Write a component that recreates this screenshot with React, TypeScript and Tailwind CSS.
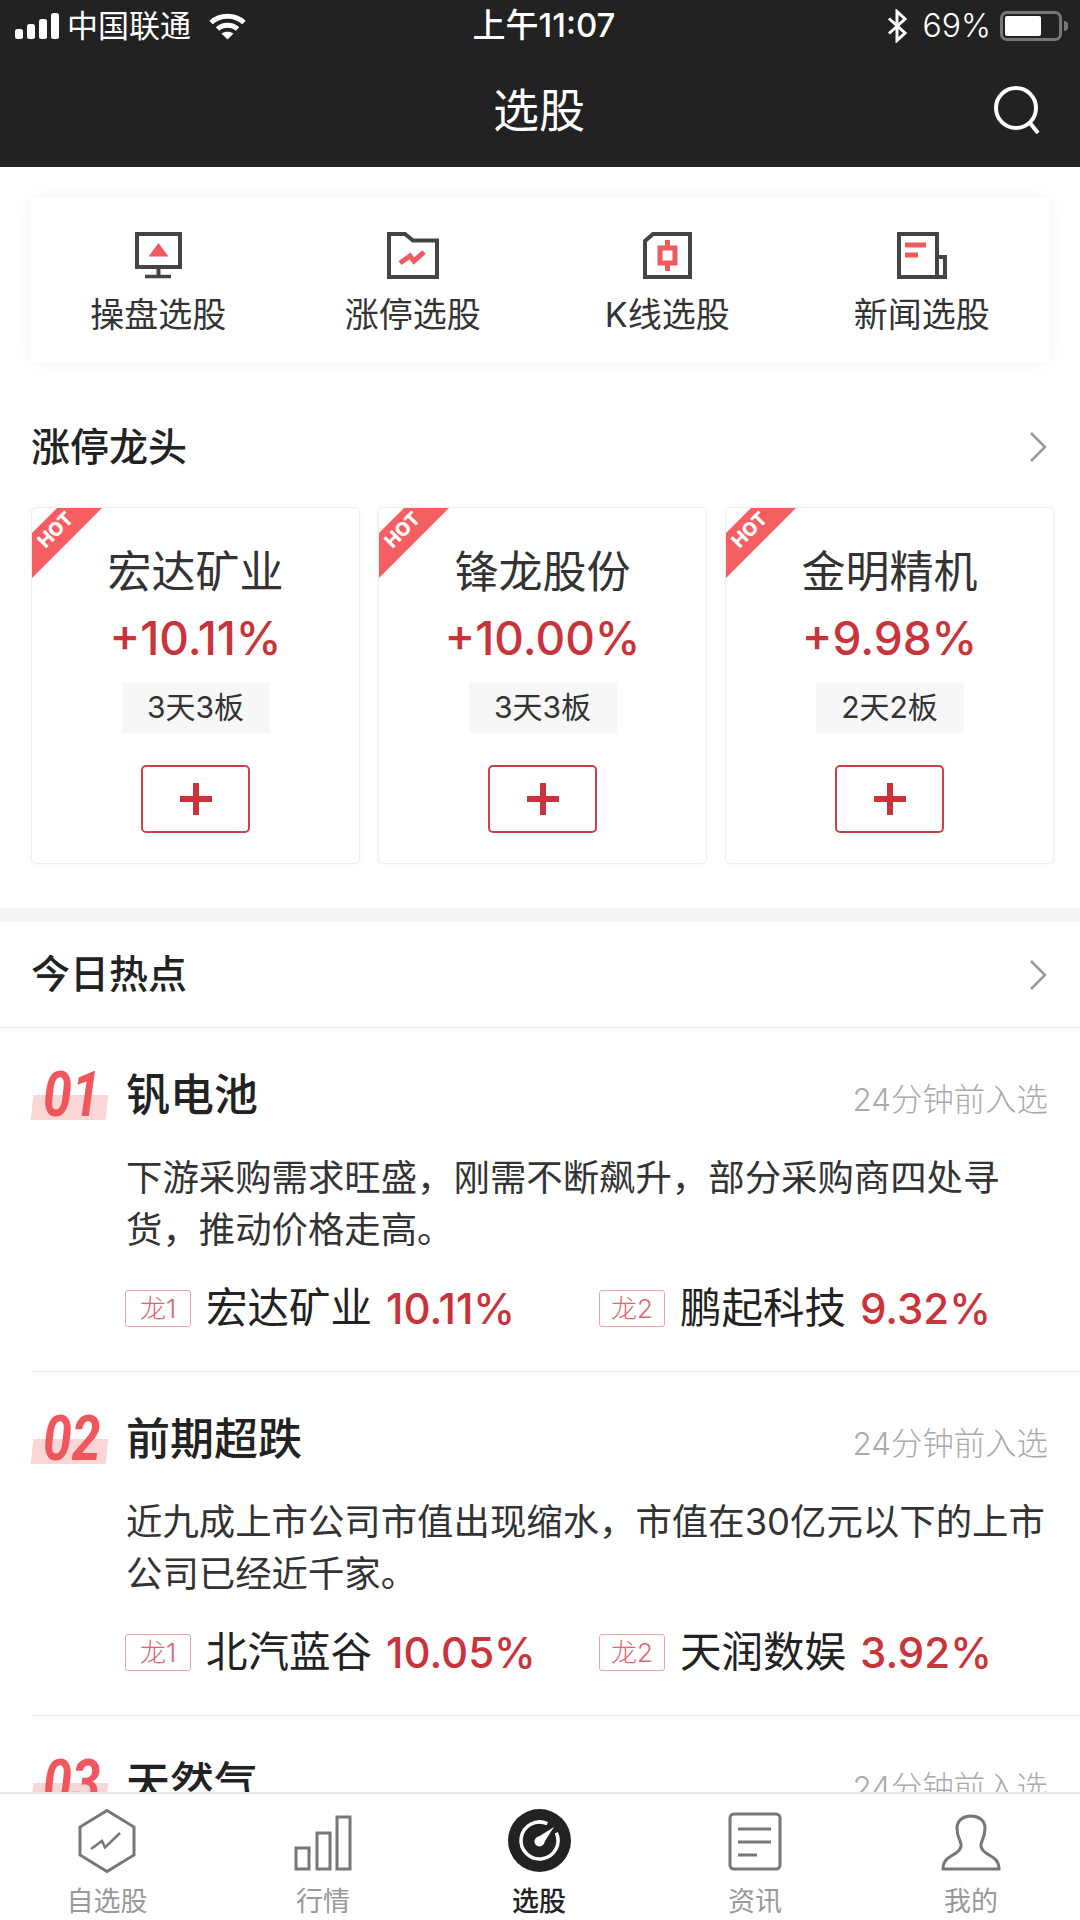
const FONT = "font-['Inter','Noto_Sans_CJK_SC',sans-serif]";

const leaders = [
  { name: "宏达矿业", pct: "+10.11%", days: "3天3板" },
  { name: "锋龙股份", pct: "+10.00%", days: "3天3板" },
  { name: "金明精机", pct: "+9.98%", days: "2天2板" },
];

const topics = [
  {
    no: "01",
    title: "钒电池",
    desc: "下游采购需求旺盛，刚需不断飙升，部分采购商四处寻货，推动价格走高。",
    stocks: [
      { name: "宏达矿业", pct: "10.11%" },
      { name: "鹏起科技", pct: "9.32%" },
    ],
  },
  {
    no: "02",
    title: "前期超跌",
    desc: "近九成上市公司市值出现缩水，市值在30亿元以下的上市公司已经近千家。",
    stocks: [
      { name: "北汽蓝谷", pct: "10.05%" },
      { name: "天润数娱", pct: "3.92%" },
    ],
  },
  { no: "03", title: "天然气", desc: "", stocks: [] },
];

function StatusBar() {
  return (
    <div className="grid h-[52px] grid-cols-3 items-center px-[15px] text-[31px] text-white">
      <div className="flex items-center">
        <svg width="44" height="27" viewBox="0 0 44 27" fill="#fff">
          <rect x="0" y="16" width="8" height="10" rx="2.5" />
          <rect x="12" y="11" width="8" height="15" rx="2.5" />
          <rect x="24" y="6" width="8" height="20" rx="2.5" />
          <rect x="36" y="0" width="8" height="26" rx="2.5" />
        </svg>
        <span className="ml-[8px]">中国联通</span>
        <svg className="ml-[18px]" width="37" height="27" viewBox="0 0 37 27" fill="none" stroke="#fff" strokeWidth="5">
          <path d="M2 9.5C11 1 26 1 35 9.5" />
          <path d="M8.5 16C14 11 23 11 28.5 16" />
          <path d="M18.5 26.5L12.5 20.5C16 18 21 18 24.5 20.5Z" fill="#fff" stroke="none" />
        </svg>
      </div>
      <div className="pl-[8px] text-center text-[33px] font-medium">上午11:07</div>
      <div className="flex items-center justify-end">
        <svg width="20" height="34" viewBox="0 0 20 34" fill="none" stroke="#fff" strokeWidth="3">
          <path d="M2 9.5L18 24L10 31.5V2.5L18 10L2 24.5" />
        </svg>
        <span className="ml-[16px] text-[32px] font-light">69%</span>
        <div className="ml-[9px] mr-[-3px] flex items-center">
          <div className="h-[30px] w-[62px] rounded-[7px] border-[3px] border-[#777] p-[2px]">
            <div className="h-full w-[36px] rounded-[2px] bg-white" />
          </div>
          <div className="ml-[2px] h-[10px] w-[4px] rounded-r bg-[#777]" />
        </div>
      </div>
    </div>
  );
}

function MonitorIcon() {
  return (
    <svg width="47" height="47" viewBox="0 0 47 47" fill="none">
      <rect x="2" y="2" width="43" height="33" stroke="#444" strokeWidth="4" />
      <path d="M23.5 36V44" stroke="#444" strokeWidth="4" />
      <path d="M10 44.5H36" stroke="#444" strokeWidth="3.5" />
      <path d="M23.5 11L33.5 24.5H13.5Z" fill="#ee5a5f" />
    </svg>
  );
}

function FolderIcon() {
  return (
    <svg width="52" height="47" viewBox="0 0 52 47" fill="none">
      <path d="M2 2H18L26 8.5H50V45H2Z" stroke="#444" strokeWidth="4" />
      <path d="M13 31L23 24L27 29L37 20" stroke="#ee5a5f" strokeWidth="5" />
    </svg>
  );
}

function CandleIcon() {
  return (
    <svg width="49" height="47" viewBox="0 0 49 47" fill="none">
      <path d="M10 2H47V45H2V9Z" stroke="#444" strokeWidth="4" />
      <path d="M24.5 8V39" stroke="#ee5a5f" strokeWidth="5" />
      <rect x="17" y="16" width="15" height="15" fill="#fff" stroke="#ee5a5f" strokeWidth="5" />
    </svg>
  );
}

function NewsIcon() {
  return (
    <svg width="50" height="47" viewBox="0 0 50 47" fill="none">
      <path d="M2 2H40V45H2Z" stroke="#444" strokeWidth="4" />
      <path d="M40 25H48V45H40" stroke="#444" strokeWidth="4" />
      <path d="M8 13H29M8 23H21" stroke="#ee5a5f" strokeWidth="5" />
    </svg>
  );
}

function Chevron() {
  return (
    <svg width="20" height="34" viewBox="0 0 20 34" fill="none" stroke="#999" strokeWidth="2.5">
      <path d="M3 3L17 17L3 31" />
    </svg>
  );
}

function QuickEntry({ icon, label }: { icon: React.ReactNode; label: string }) {
  return (
    <div className="flex flex-col items-center">
      <div className="flex h-[47px] items-center">{icon}</div>
      <div className="mt-[12px] text-[34px] leading-[48px] text-[#333]">{label}</div>
    </div>
  );
}

function LeaderCard({ name, pct, days }: { name: string; pct: string; days: string }) {
  return (
    <div className="relative flex h-[357px] flex-col items-center overflow-hidden rounded-[5px] border border-[#eee] bg-white pt-[34px] shadow-[0_0_10px_rgba(0,0,0,0.03)]">
      <div className="absolute left-0 top-0 h-[70px] w-[70px] bg-[#f55f62] [clip-path:polygon(25px_0,70px_0,0_70px,0_25px)]" />
      <span className="absolute left-[4px] top-[13px] w-[36px] -rotate-45 text-center text-[19px] font-extrabold leading-[22px] text-white">
        HOT
      </span>
      <div className="text-[44px] leading-[60px] text-[#333]">{name}</div>
      <div className="mt-[6px] text-[46px] font-medium leading-[60px] text-[#c9333a]">{pct}</div>
      <div className="mt-[14px] flex h-[51px] w-[148px] items-center justify-center bg-[#f7f7f7] text-[30px] text-[#333]">
        {days}
      </div>
      <div className="mt-[32px] flex h-[68px] w-[109px] items-center justify-center rounded-[5px] border-2 border-[#c9434a]">
        <svg width="32" height="32" viewBox="0 0 32 32" fill="#c9333a">
          <rect x="13" y="0" width="6" height="32" />
          <rect x="0" y="13" width="32" height="6" />
        </svg>
      </div>
    </div>
  );
}

function Topic({ no, title, desc, stocks }: (typeof topics)[number]) {
  return (
    <div className="ml-[31px] h-[344px] border-b border-[#e8e8e8] pt-[40px]">
      <div className="flex h-[54px] items-center pr-[32px]">
        <div className="relative h-[54px] w-[95px] shrink-0">
          <div className="absolute bottom-[2px] left-[1px] h-[25px] w-[75px] -skew-x-6 bg-[#fbd6d7]" />
          <span className="absolute left-[12px] top-[-6px] origin-left scale-x-[0.82] text-[63px] font-bold italic leading-[66px] text-[#f0565c] font-['Roboto',sans-serif]">
            {no}
          </span>
        </div>
        <div className="flex-1 text-[44px] font-medium leading-[54px] text-[#222]">{title}</div>
        <div className="mt-[12px] text-[31.4px] font-light text-[#aaa]">24分钟前入选</div>
      </div>
      <div className="mt-[30px] pl-[95px] pr-[32px] text-[36.4px] leading-[52px] text-[#333]">{desc}</div>
      <div className="mt-[29px] flex pl-[94px]">
        {stocks.map((s, i) => (
          <div key={s.name} className="flex h-[46px] w-[474px] items-center">
            <div className="flex h-[37px] w-[66px] items-center justify-center rounded-[3px] border border-[#eda5a8] text-[26px] font-light text-[#e0646a]">
              龙{i + 1}
            </div>
            <span className="ml-[15px] text-[41.5px] text-[#222]">{s.name}</span>
            <span className="ml-[14px] text-[42px] font-medium text-[#c9333a]">{s.pct}</span>
          </div>
        ))}
      </div>
    </div>
  );
}

function TabBar() {
  const stroke = { fill: "none", stroke: "#777", strokeWidth: 3 };
  return (
    <div className="grid h-[128px] shrink-0 grid-cols-5 border-t-2 border-[#e8e8e8] bg-white">
      <Tab label="自选股">
        <svg width="58" height="64" viewBox="0 0 58 64" {...stroke}>
          <path d="M29 1.5L56 18V46L29 62.5L2 46V18Z" />
          <path d="M13 40L24 32L27 38.5L42 24" strokeWidth="2.5" />
        </svg>
      </Tab>
      <Tab label="行情">
        <svg width="58" height="56" viewBox="0 0 58 56" className="mt-[6px]" {...stroke}>
          <rect x="2" y="33" width="13" height="21" />
          <rect x="23" y="18" width="13" height="36" />
          <rect x="43" y="2" width="13" height="52" />
        </svg>
      </Tab>
      <Tab label="选股" active>
        <svg width="63" height="63" viewBox="0 0 63 63">
          <circle cx="31.5" cy="31.5" r="31.5" fill="#222" />
          <path d="M39.3 14.7A18.5 18.5 0 1 0 48.3 23.7" fill="none" stroke="#fff" strokeWidth="3.5" />
          <circle cx="31.5" cy="32.5" r="5" fill="#fff" />
          <path d="M28.5 29L46 18L35 35Z" fill="#fff" />
        </svg>
      </Tab>
      <Tab label="资讯">
        <svg width="54" height="59" viewBox="0 0 54 59" className="mt-[3px]" {...stroke}>
          <rect x="2" y="2" width="50" height="55" rx="4" />
          <path d="M10 17H43M10 30H43M10 43H29" />
        </svg>
      </Tab>
      <Tab label="我的">
        <svg width="60" height="58" viewBox="0 0 60 58" className="mt-[5px]" {...stroke}>
          <path d="M2 55C2 45 9 43 15 39C21 35 21 31 19 27C17 23 16 19 16 14C16 6 23 2 30 2C37 2 44 6 44 14C44 19 43 23 41 27C39 31 39 35 45 39C51 43 58 45 58 55Z" />
        </svg>
      </Tab>
    </div>
  );
}

function Tab({ label, active, children }: { label: string; active?: boolean; children: React.ReactNode }) {
  return (
    <div className="flex flex-col items-center pr-[2px] pt-[15px]">
      <div className="flex h-[64px] items-start justify-center">{children}</div>
      <div className={`mt-[13px] text-[27px] leading-[32px] ${active ? "font-medium text-[#222]" : "text-[#999]"}`}>
        {label}
      </div>
    </div>
  );
}

export default function App() {
  return (
    <div lang="zh-CN" className={`flex h-[1920px] w-[1080px] flex-col overflow-hidden bg-white ${FONT}`}>
      <div className="h-[167px] shrink-0 bg-[#222]">
        <StatusBar />
        <div className="flex h-[115px] items-center justify-between pl-[493px] pr-[40px]">
          <span className="text-[46px] leading-[60px] text-white">选股</span>
          <svg width="46" height="48" viewBox="0 0 46 48" fill="none" stroke="#fff" strokeWidth="4">
            <circle cx="22" cy="22" r="20" />
            <path d="M36 37L44 47" />
          </svg>
        </div>
      </div>

      <div className="min-h-0 flex-1 overflow-hidden">
        <div className="mx-[31px] mt-[31px] grid h-[164px] w-[1018px] grid-cols-4 bg-white pt-[34px] shadow-[0_0_20px_rgba(0,0,0,0.06)]">
          <QuickEntry icon={<MonitorIcon />} label="操盘选股" />
          <QuickEntry icon={<FolderIcon />} label="涨停选股" />
          <QuickEntry icon={<CandleIcon />} label="K线选股" />
          <QuickEntry icon={<NewsIcon />} label="新闻选股" />
        </div>

        <div className="mt-[60px] flex h-[50px] items-center justify-between pl-[31px] pr-[32px]">
          <span className="text-[39px] font-medium text-[#222]">涨停龙头</span>
          <Chevron />
        </div>

        <div className="ml-[31px] mr-[26px] mt-[35px] grid grid-cols-3 gap-[18px]">
          {leaders.map((l) => (
            <LeaderCard key={l.name} {...l} />
          ))}
        </div>

        <div className="mt-[44px] h-[14px] bg-[#f5f5f5]" />

        <div className="flex h-[106px] items-center justify-between border-b border-[#e8e8e8] pl-[31px] pr-[32px]">
          <span className="text-[39px] font-medium text-[#222]">今日热点</span>
          <Chevron />
        </div>

        {topics.map((t) => (
          <Topic key={t.no} {...t} />
        ))}
      </div>

      <TabBar />
    </div>
  );
}
